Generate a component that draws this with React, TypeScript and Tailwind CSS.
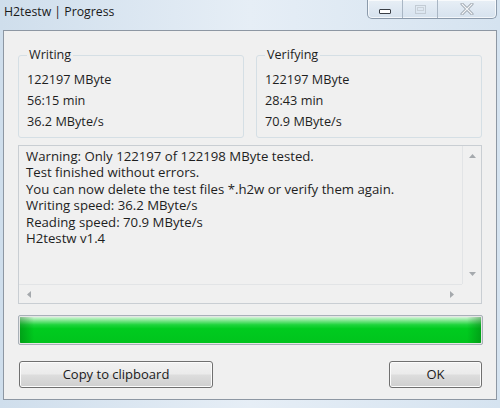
import React from "react";

const font = { fontFamily: '"Open Sans", "Noto Sans", sans-serif' };

function Group({ title, rows }: { title: string; rows: string[] }) {
  return (
    <fieldset className="w-[226px] h-[90px] border border-[#d5dfe5] rounded-[3px] px-[8px]">
      <legend className="ml-[0px] px-[2px] text-[12.6px] leading-[14px] text-[#1e1e1e]">{title}</legend>
      <div className="flex flex-col mt-[7px]">
        {rows.map((r) => (
          <div key={r} className="h-[21px] leading-[21px] text-[12.7px] text-[#1e1e1e]">
            {r}
          </div>
        ))}
      </div>
    </fieldset>
  );
}

export default function App() {
  const lines = [
    "Warning: Only 122197 of 122198 MByte tested.",
    "Test finished without errors.",
    "You can now delete the test files *.h2w or verify them again.",
    "Writing speed: 36.2 MByte/s",
    "Reading speed: 70.9 MByte/s",
    "H2testw v1.4",
  ];
  return (
    <div
      style={font}
      className="w-[500px] h-[408px] flex flex-col bg-gradient-to-r from-[#cfdeec] via-[#e6eef6] to-[#d5e3f0] overflow-hidden"
    >
      {/* title bar */}
      <div className="h-[30px] flex justify-between items-start shrink-0">
        <div className="pl-[4px] pt-[4px] text-[12.3px] leading-[16px] text-[#1a1a1a]">H2testw | Progress</div>
        <div className="mr-[3px] flex h-[19px] border border-t-0 border-[#8b9aab] rounded-b-[5px] bg-gradient-to-b from-[#e8eff6] to-[#d6e2ee] shadow-[inset_0_0_0_1px_rgba(255,255,255,0.7)]">
          <div className="w-[35px] flex items-center justify-center border-r border-[#a9b6c4]">
            <div className="mt-[4px] w-[12px] h-[5px] border-[1.5px] border-[#3a3f46] rounded-[1px] bg-white" />
          </div>
          <div className="w-[35px] flex items-center justify-center border-r border-[#a9b6c4]">
            <div className="w-[11px] h-[9px] border border-[#c2cbd4] flex items-center justify-center">
              <div className="w-[7px] h-[4px] border border-[#c9d1d9]" />
            </div>
          </div>
          <div className="w-[58px] flex items-center justify-center">
            <svg width="14" height="12" viewBox="0 0 14 12">
              <path d="M2 1 L12 11 M12 1 L2 11" stroke="#9aa3ad" strokeWidth="3" strokeLinecap="round" />
              <path d="M2 1 L12 11 M12 1 L2 11" stroke="#f4f6f8" strokeWidth="1.2" strokeLinecap="round" />
            </svg>
          </div>
        </div>
      </div>

      {/* client */}
      <div className="ml-[3px] mr-[3px] mb-[8px] flex-1 border border-[#8d97a3] bg-[#f0f0f0] flex flex-col pl-[14px] pr-[14px] pt-[17px]">
        <div className="flex gap-[12px]">
          <Group title="Writing" rows={["122197 MByte", "56:15 min", "36.2 MByte/s"]} />
          <Group title="Verifying" rows={["122197 MByte", "28:43 min", "70.9 MByte/s"]} />
        </div>

        {/* text area */}
        <div className="mt-[7px] w-[464px] h-[159px] border border-[#c9ced3] bg-[#f0f0f0] grid grid-cols-[1fr_19px] grid-rows-[1fr_19px]">
          <div className="pl-[7px] pt-[2px] text-[13.2px] leading-[16.4px] text-[#1e1e1e] overflow-hidden whitespace-nowrap">
            {lines.map((l) => (
              <div key={l}>{l}</div>
            ))}
          </div>
          <div className="border-l border-[#e2e4e6] flex flex-col items-center justify-between py-[8px]">
            <svg width="7" height="4" viewBox="0 0 7 4"><path d="M0 4 L3.5 0 L7 4 Z" fill="#a5a9ad" /></svg>
            <svg width="7" height="4" viewBox="0 0 7 4"><path d="M0 0 L3.5 4 L7 0 Z" fill="#a5a9ad" /></svg>
          </div>
          <div className="border-t border-[#e2e4e6] flex items-center justify-between px-[8px]">
            <svg width="4" height="7" viewBox="0 0 4 7"><path d="M4 0 L0 3.5 L4 7 Z" fill="#a5a9ad" /></svg>
            <svg width="4" height="7" viewBox="0 0 4 7"><path d="M0 0 L4 3.5 L0 7 Z" fill="#a5a9ad" /></svg>
          </div>
          <div className="bg-[#f0f0f0]" />
        </div>

        {/* progress */}
        <div className="mt-[11px] w-[465px] h-[30px] border border-[#a8b0b8] rounded-[2px] p-[1px] bg-[#e6e6e6]">
          <div className="w-full h-full rounded-[1px] bg-[linear-gradient(to_bottom,#d4f5d8_0%,#7fe68e_14%,#1fd43c_30%,#00cb1f_45%,#00c41d_100%)] relative">
            <div className="absolute inset-y-0 left-0 w-[14px] bg-gradient-to-r from-[rgba(0,90,10,0.35)] to-transparent" />
            <div className="absolute inset-y-0 right-0 w-[14px] bg-gradient-to-l from-[rgba(0,90,10,0.35)] to-transparent" />
          </div>
        </div>

        {/* buttons */}
        <div className="mt-[16px] flex justify-between pl-[1px]">
          <button className="w-[194px] h-[27px] border border-[#707070] rounded-[3px] bg-[linear-gradient(to_bottom,#f2f2f2_0%,#ebebeb_48%,#dddddd_52%,#cfcfcf_100%)] shadow-[inset_0_0_0_1px_#fcfcfc] text-[13px] text-[#1a1a1a]">
            Copy to clipboard
          </button>
          <button className="w-[93px] h-[27px] border border-[#707070] rounded-[3px] bg-[linear-gradient(to_bottom,#f2f2f2_0%,#ebebeb_48%,#dddddd_52%,#cfcfcf_100%)] shadow-[inset_0_0_0_1px_#fcfcfc] text-[13px] text-[#1a1a1a]">
            OK
          </button>
        </div>
      </div>
    </div>
  );
}
